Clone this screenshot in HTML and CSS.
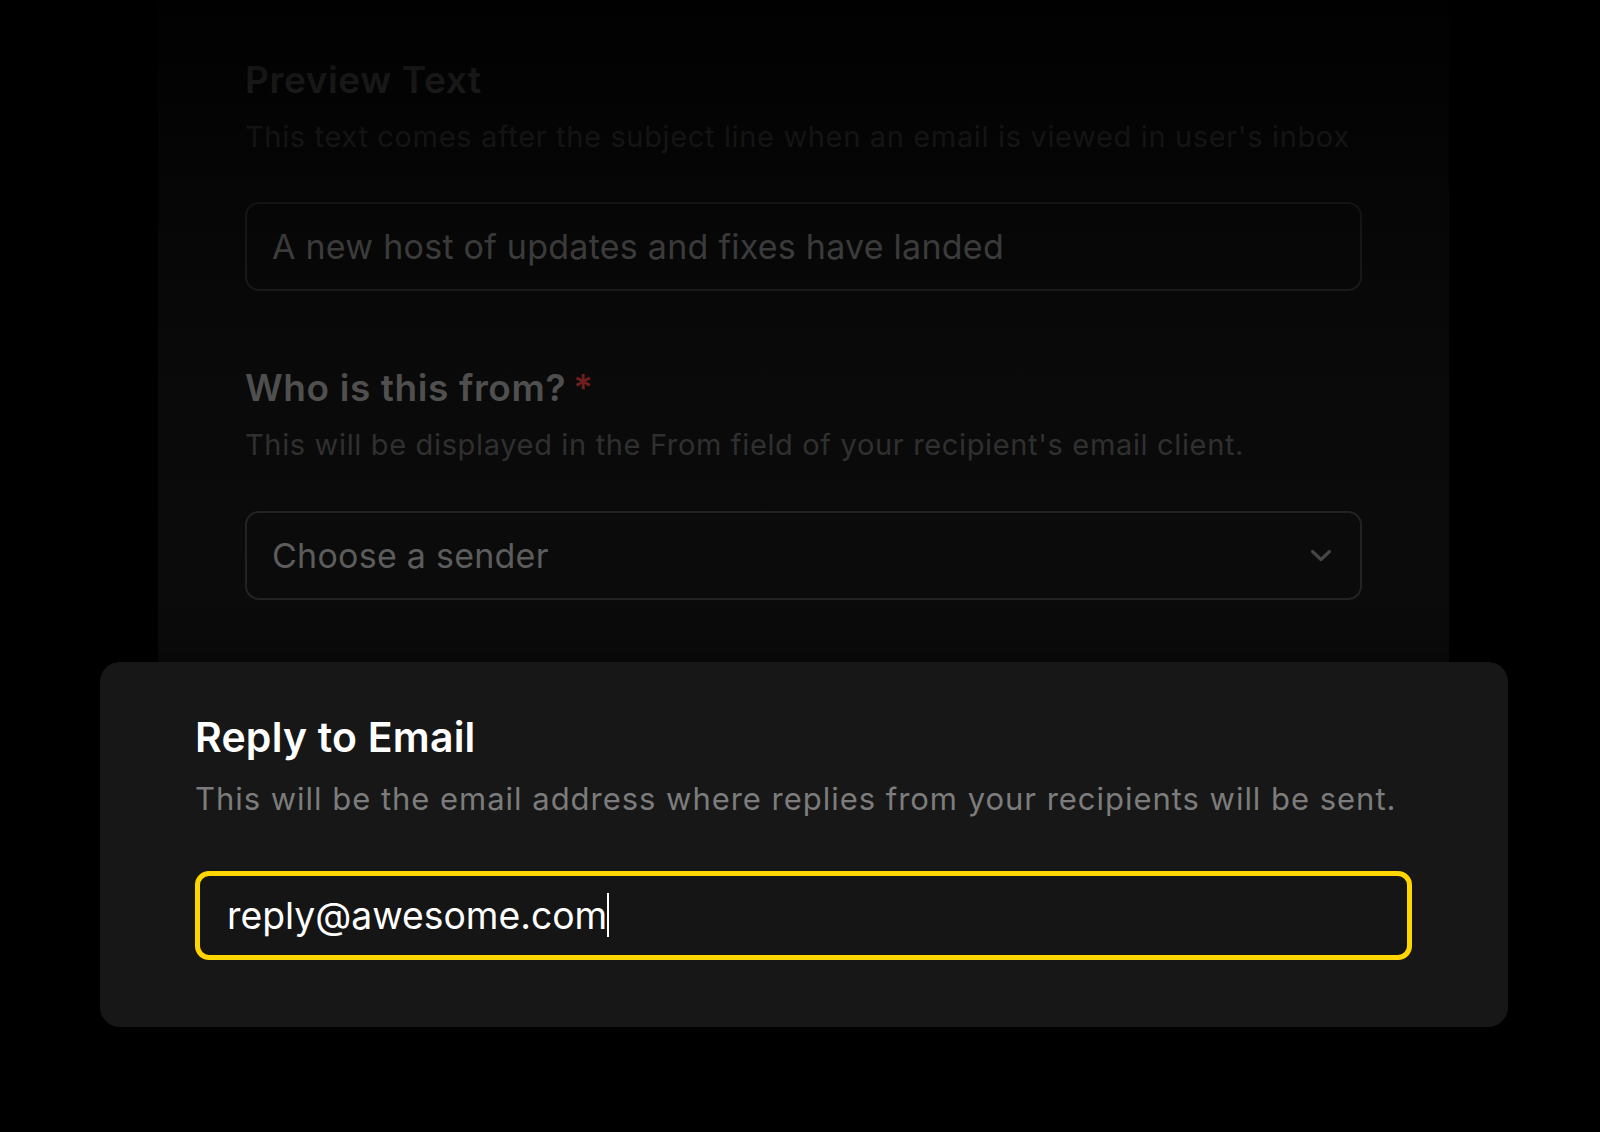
FILE: index.html
```html
<!DOCTYPE html>
<html lang="en">
<head>
<meta charset="utf-8">
<title>Reply to Email</title>
<link rel="stylesheet" href="styles.css">
</head>
<body>
<div class="stage">
  <section class="panel">
    <div class="field">
      <h2 class="label">Preview Text</h2>
      <p class="hint">This text comes after the subject line when an email is viewed in user's inbox</p>
      <div class="box">A new host of updates and fixes have landed</div>
    </div>
    <div class="field field-second">
      <h2 class="label">Who is this from? <span class="req">*</span></h2>
      <p class="hint">This will be displayed in the From field of your recipient's email client.</p>
      <div class="box select">
        <span>Choose a sender</span>
        <svg class="chevron" width="22" height="13" viewBox="0 0 22 13" aria-hidden="true"><path d="M2.5 2.5 L11 10.5 L19.5 2.5" fill="none" stroke="currentColor" stroke-width="3.2" stroke-linecap="round" stroke-linejoin="round"/></svg>
      </div>
    </div>
    <div class="fade"></div>
  </section>

  <section class="card">
    <h2 class="card-title">Reply to Email</h2>
    <p class="card-hint">This will be the email address where replies from your recipients will be sent.</p>
    <div class="focus-input"><span class="value">reply@awesome.com</span><span class="caret"></span></div>
  </section>
</div>
</body>
</html>
```

FILE: styles.css
```css
html, body {
  margin: 0;
  padding: 0;
  background: #000;
}

body {
  font-family: Inter, "Noto Sans", "Liberation Sans", sans-serif;
  -webkit-font-smoothing: antialiased;
}

.stage {
  position: relative;
  width: 1600px;
  height: 1132px;
  overflow: hidden;
  background: #000;
}

/* background (dimmed) form panel */
.panel {
  position: relative;
  box-sizing: border-box;
  width: 1291px;
  height: 720px;
  margin-left: 158px;
  padding: 58px 87px 0;
  background: #0b0b0b;
}

.field {
  display: flex;
  flex-direction: column;
}

.field-second {
  margin-top: 75px;
}

.label {
  margin: 0;
  font-size: 37px;
  line-height: 44px;
  font-weight: 600;
  color: #5a5a5a;
  letter-spacing: 0.6px;
}

.req {
  color: #7e2222;
  margin-left: -3px;
}

.hint {
  margin: 18px 0 0;
  font-size: 29px;
  line-height: 34px;
  font-weight: 400;
  color: #343434;
  letter-spacing: 0.65px;
}

.box {
  box-sizing: border-box;
  height: 89px;
  margin-top: 48px;
  display: flex;
  align-items: center;
  padding: 0 25px;
  border: 2px solid #242424;
  border-radius: 14px;
  font-size: 34px;
  letter-spacing: 0.25px;
  color: #5e5e5e;
}

.field-second .box {
  margin-top: 49px;
}

.select {
  justify-content: space-between;
  padding-right: 28px;
}

.chevron {
  color: #464646;
  display: block;
}

.fade {
  position: absolute;
  inset: 0;
  pointer-events: none;
  background: linear-gradient(to bottom,
    rgba(0,0,0,0.9) 0px,
    rgba(0,0,0,0.75) 80px,
    rgba(0,0,0,0.38) 247px,
    rgba(0,0,0,0.12) 385px,
    rgba(0,0,0,0.02) 555px,
    rgba(0,0,0,0) 720px);
}

/* focused card overlay */
.card {
  position: absolute;
  left: 100px;
  top: 662px;
  box-sizing: border-box;
  width: 1408px;
  padding: 51px 96px 67px 95px;
  background: #171717;
  border-radius: 20px;
  box-shadow: 0 -10px 40px rgba(0,0,0,0.35);
}

.card-title {
  margin: 0;
  font-size: 41px;
  line-height: 48px;
  font-weight: 600;
  color: #ffffff;
  letter-spacing: 0.2px;
}

.card-hint {
  margin: 20px 0 0;
  font-size: 31px;
  line-height: 36px;
  font-weight: 400;
  color: #7c7c7c;
  letter-spacing: 0.97px;
}

.focus-input {
  box-sizing: border-box;
  height: 89px;
  margin-top: 54px;
  display: flex;
  align-items: center;
  padding: 0 27px;
  border: 5px solid #ffd600;
  border-radius: 14px;
  background: #151515;
  font-size: 37.3px;
  color: #ffffff;
}

.value {
  white-space: nowrap;
}

.caret {
  display: inline-block;
  width: 2px;
  height: 44px;
  margin-left: 0;
  background: #ffffff;
  align-self: center;
  position: relative;
  top: -1px;
}
```
